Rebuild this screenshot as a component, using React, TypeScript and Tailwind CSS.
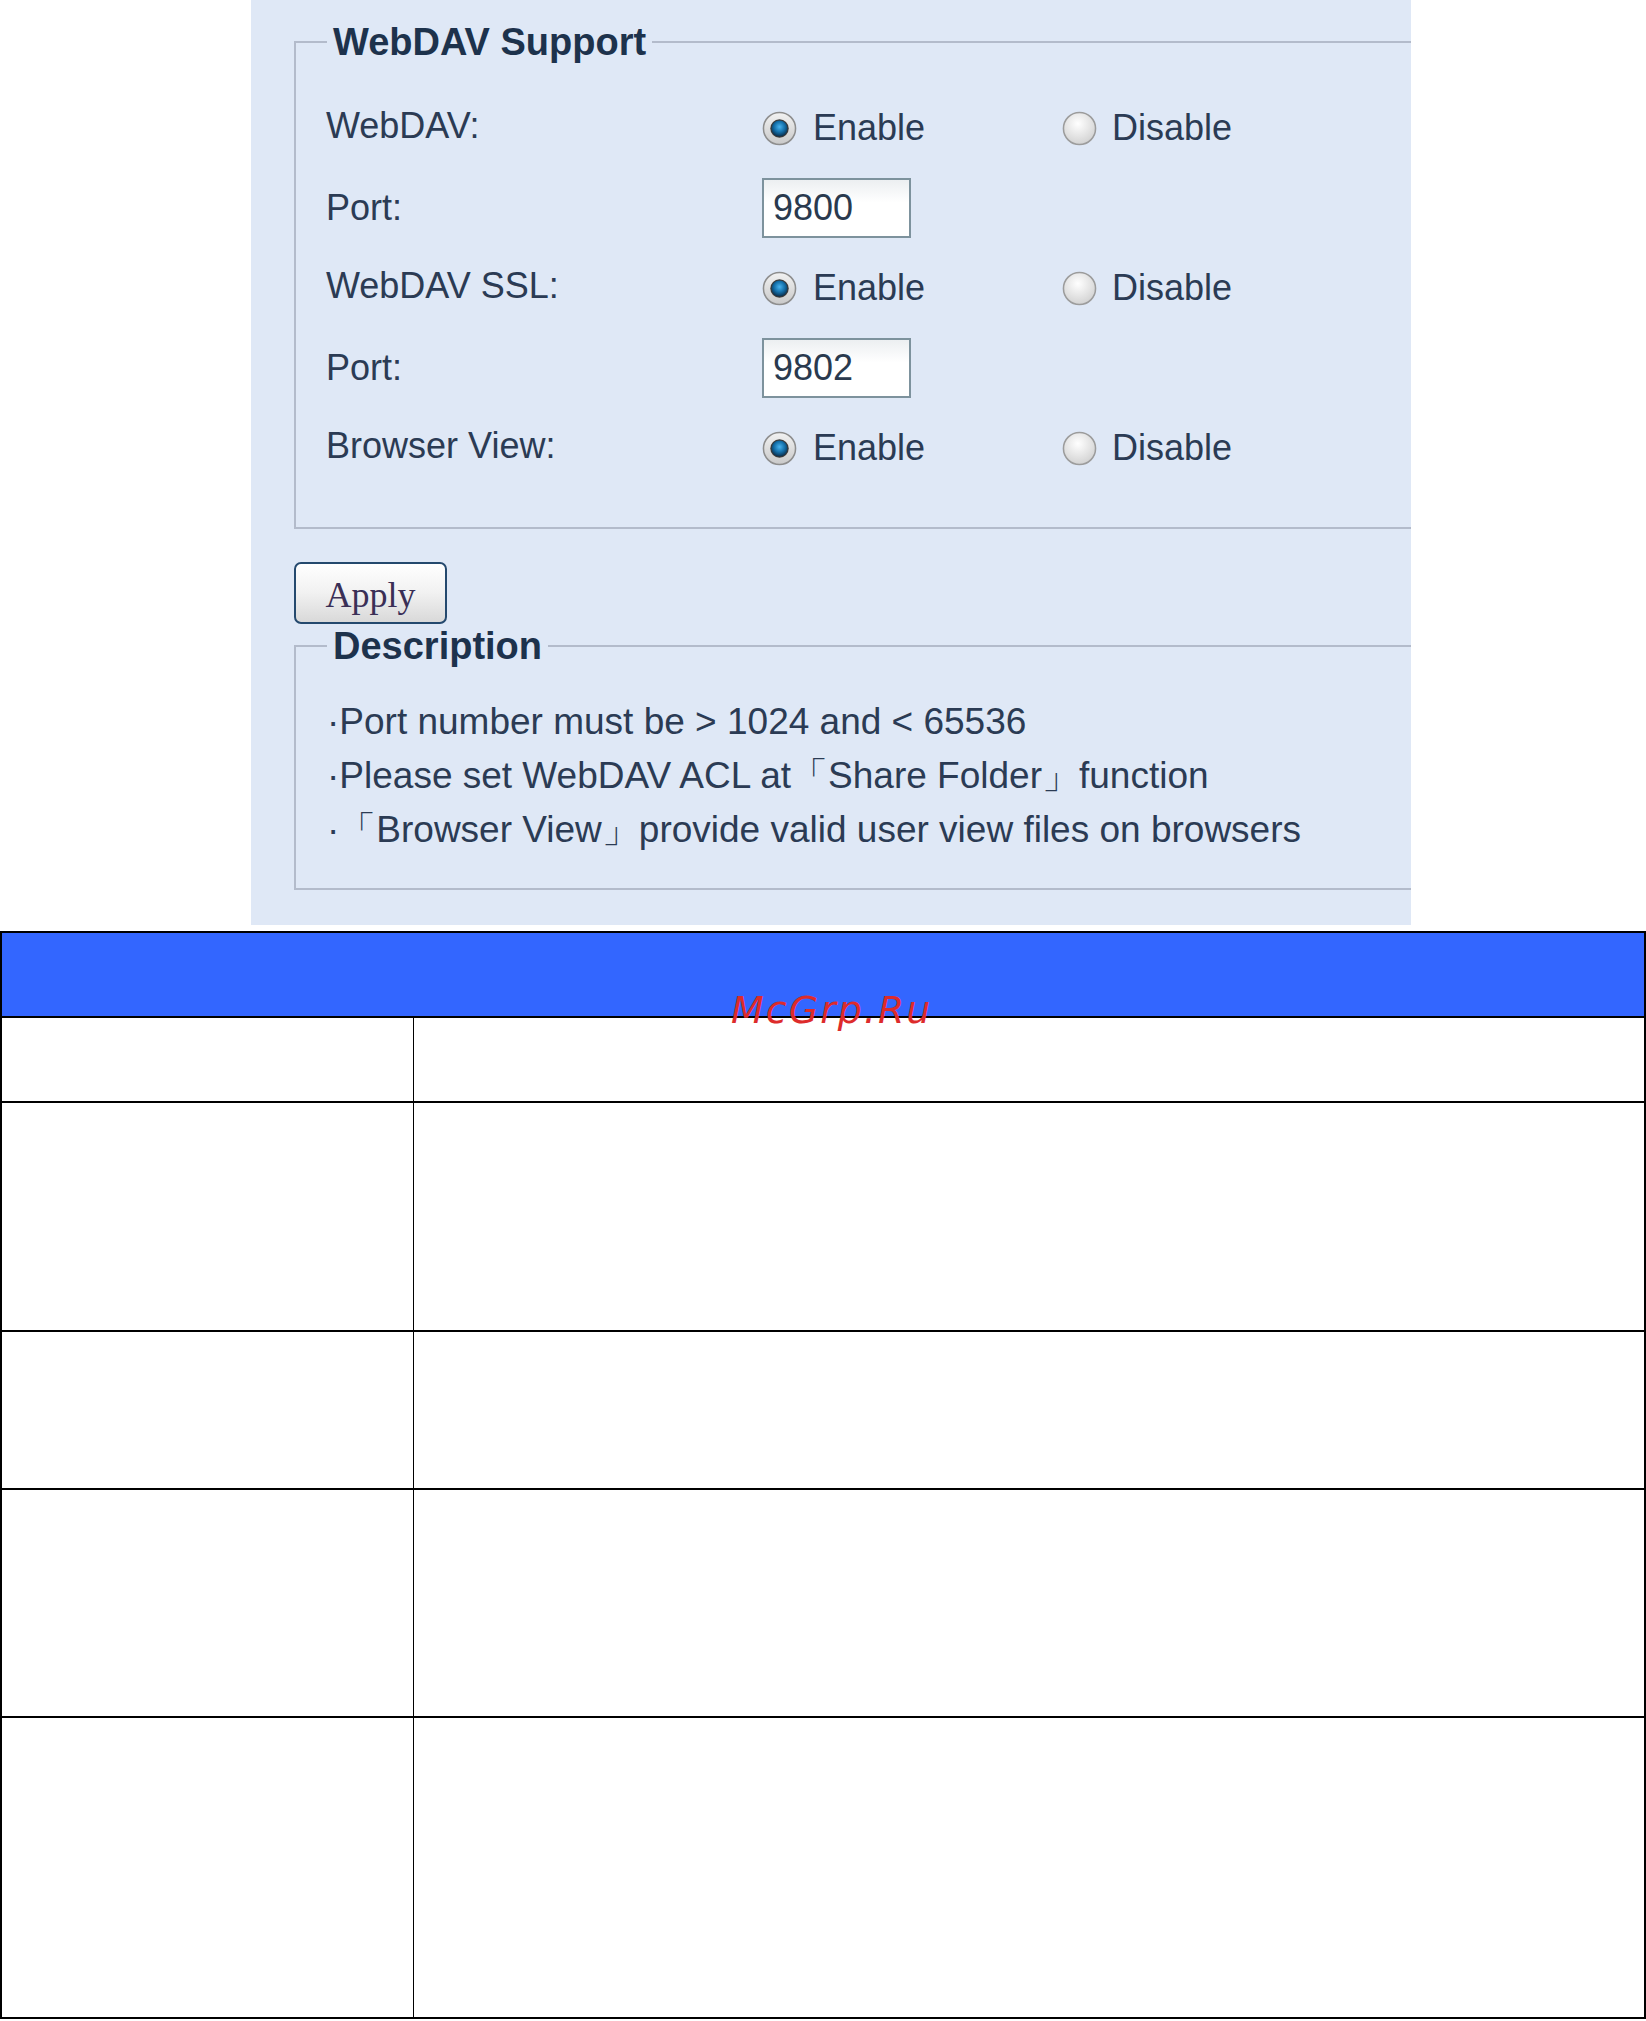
import React from 'react'

const sans = { fontFamily: '"Liberation Sans", Arial, sans-serif' }

function Radio({ checked }: { checked: boolean }) {
  return (
    <svg width="35" height="35" viewBox="0 0 36 36" className="shrink-0">
      <defs>
        <radialGradient id="rOff" cx="45%" cy="35%" r="70%">
          <stop offset="0%" stopColor="#ffffff" />
          <stop offset="100%" stopColor="#cfcfcf" />
        </radialGradient>
        <linearGradient id="rRing" x1="0" y1="0" x2="0" y2="1">
          <stop offset="0%" stopColor="#f2f2f2" />
          <stop offset="100%" stopColor="#c9c9c9" />
        </linearGradient>
        <radialGradient id="rDot" cx="50%" cy="40%" r="60%">
          <stop offset="0%" stopColor="#49b3ee" />
          <stop offset="55%" stopColor="#1470aa" />
          <stop offset="100%" stopColor="#0a2f4d" />
        </radialGradient>
      </defs>
      {checked ? (
        <>
          <circle cx="18" cy="18" r="16.5" fill="url(#rRing)" stroke="#8e8e8e" strokeWidth="1.6" />
          <circle cx="18" cy="18" r="9.5" fill="#3a3a3a" />
          <circle cx="18" cy="18" r="8.2" fill="url(#rDot)" />
        </>
      ) : (
        <circle cx="18" cy="18" r="16.5" fill="url(#rOff)" stroke="#9c9c9c" strokeWidth="1.6" />
      )}
    </svg>
  )
}

function RadioRow({ label }: { label: string }) {
  return (
    <div className="flex items-center h-[80px]">
      <div className="w-[436px] mb-[5px]">{label}</div>
      <div className="flex items-center w-[300px] gap-[16px]">
        <Radio checked />
        <span>Enable</span>
      </div>
      <div className="flex items-center gap-[15px]">
        <Radio checked={false} />
        <span>Disable</span>
      </div>
    </div>
  )
}

function PortRow({ value }: { value: string }) {
  return (
    <div className="flex items-center h-[80px]">
      <div className="w-[436px]">Port:</div>
      <div className="w-[149px] h-[60px] border-2 border-[#7d929d] bg-gradient-to-b from-[#eceff1] to-white to-40% flex items-center pl-[9px] text-[#2a3a4e]">
        {value}
      </div>
    </div>
  )
}

export default function App() {
  return (
    <div className="relative w-[1646px] h-[2021px] bg-white overflow-hidden" style={sans}>
      {/* settings panel */}
      <div className="ml-[251px] w-[1160px] h-[925px] bg-[#dfe8f6] overflow-hidden pt-[20px] pl-[43px] text-[36px] text-[#2b3b54]">
        <fieldset className="w-[1150px] border-2 border-[#b3bbcb] pt-[24px] pb-[39px] pl-[30px]">
          <legend className="ml-[1px] px-[6px] leading-[44px] text-[38px] font-bold text-[#1d324c]">WebDAV Support</legend>
          <RadioRow label="WebDAV:" />
          <PortRow value="9800" />
          <RadioRow label="WebDAV SSL:" />
          <PortRow value="9802" />
          <RadioRow label="Browser View:" />
        </fieldset>

        <button
          className="mt-[33px] w-[153px] h-[62px] border-2 border-[#24496e] rounded-[7px] bg-gradient-to-b from-white via-[#f1f1f1] to-[#d9d9d9] text-[36px] text-[#3a2f56] leading-none pt-[4px]"
          style={{ fontFamily: '"Liberation Serif", "Times New Roman", serif' }}
        >
          Apply
        </button>

        <fieldset className="w-[1150px] border-2 border-[#b3bbcb] pt-[27px] pb-[31px] pl-[31px]">
          <legend className="px-[6px] leading-[44px] text-[38px] font-bold text-[#1d324c]">Description</legend>
          <p className="leading-[54px] text-[37px]">·Port number must be &gt; 1024 and &lt; 65536</p>
          <p className="leading-[54px] text-[37px]">·Please set WebDAV ACL at「Share Folder」function</p>
          <p className="leading-[54px] text-[37px]">·「Browser View」provide valid user view files on browsers</p>
        </fieldset>
      </div>

      {/* table */}
      <div className="mt-[6px] border-2 border-black">
        <div className="h-[83px] bg-[#3366ff]" />
        {[85, 229, 158, 228, 301].map((h, i) => (
          <div key={i} className="grid grid-cols-[411px_1fr] border-t-2 border-black" style={{ height: h }}>
            <div />
            <div className="border-l border-black" />
          </div>
        ))}
      </div>

      {/* watermark */}
      <div
        className="absolute left-[731px] top-[991px] text-[38px] italic tracking-[2px] text-[#dd2b2b] leading-none"
        style={{ fontFamily: '"DejaVu Sans", sans-serif' }}
      >
        McGrp.Ru
      </div>
    </div>
  )
}
